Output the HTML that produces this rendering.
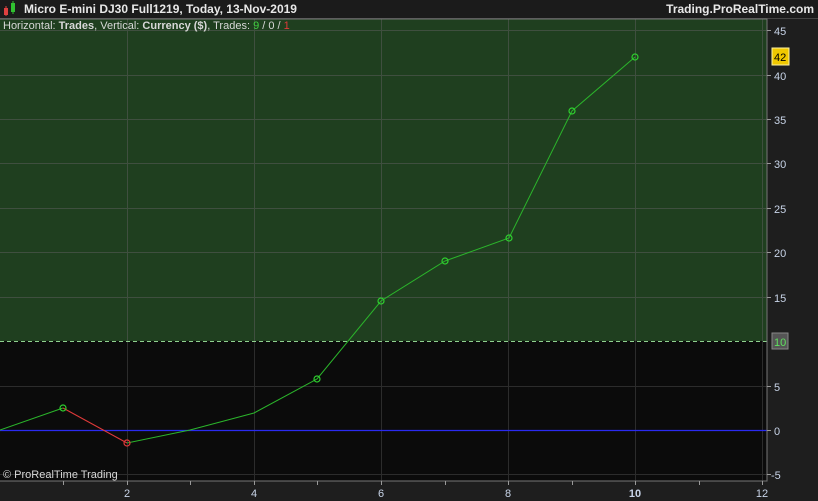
<!DOCTYPE html>
<html><head><style>
body{margin:0;width:818px;height:501px;background:#1e1e1e;overflow:hidden;font-family:"Liberation Sans",sans-serif}
</style></head><body>
<svg width="818" height="501" xmlns="http://www.w3.org/2000/svg" style="position:absolute;left:0;top:0">
<rect x="0" y="0" width="818" height="501" fill="#1e1e1e"/>
<rect x="0" y="0" width="818" height="18" fill="#1b1b1b"/>
<line x1="0" y1="18.5" x2="818" y2="18.5" stroke="#444"/>
<!-- icon -->
<rect x="4" y="8" width="4" height="7" fill="#e04040"/>
<line x1="6" y1="6" x2="6" y2="16" stroke="#e04040"/>
<rect x="11" y="3" width="4" height="9" fill="#30c030"/>
<line x1="13" y1="1" x2="13" y2="14" stroke="#30c030"/>
<text x="24" y="13" fill="#e8e8e8" font-size="12" font-weight="bold">Micro E-mini DJ30 Full1219, Today, 13-Nov-2019</text>
<text x="814" y="13" fill="#e8e8e8" font-size="12" font-weight="bold" text-anchor="end">Trading.ProRealTime.com</text>
<!-- plot -->
<rect x="0" y="19" width="767" height="322" fill="#1f3f1f"/>
<rect x="0" y="341" width="767" height="140" fill="#0b0b0b"/>
<g stroke="#3f4f3f" stroke-width="1">
<line x1="0" y1="30.5" x2="767" y2="30.5"/><line x1="0" y1="75.5" x2="767" y2="75.5"/>
<line x1="0" y1="119.5" x2="767" y2="119.5"/><line x1="0" y1="163.5" x2="767" y2="163.5"/>
<line x1="0" y1="208.5" x2="767" y2="208.5"/><line x1="0" y1="252.5" x2="767" y2="252.5"/>
<line x1="0" y1="297.5" x2="767" y2="297.5"/>
<line x1="127.5" y1="19" x2="127.5" y2="341"/><line x1="254.5" y1="19" x2="254.5" y2="341"/>
<line x1="381.5" y1="19" x2="381.5" y2="341"/><line x1="508.5" y1="19" x2="508.5" y2="341"/>
<line x1="635.5" y1="19" x2="635.5" y2="341"/><line x1="762.5" y1="19" x2="762.5" y2="341"/>
</g>
<g stroke="#2c2c2c" stroke-width="1">
<line x1="0" y1="386.5" x2="767" y2="386.5"/><line x1="0" y1="474.5" x2="767" y2="474.5"/>
<line x1="127.5" y1="341" x2="127.5" y2="481"/><line x1="254.5" y1="341" x2="254.5" y2="481"/>
<line x1="381.5" y1="341" x2="381.5" y2="481"/><line x1="508.5" y1="341" x2="508.5" y2="481"/>
<line x1="635.5" y1="341" x2="635.5" y2="481"/><line x1="762.5" y1="341" x2="762.5" y2="481"/>
</g>
<line x1="0" y1="341.5" x2="767" y2="341.5" stroke="#8fd08f" stroke-dasharray="4,3"/>
<line x1="0" y1="430.5" x2="767" y2="430.5" stroke="#2a2af0" stroke-width="1.3"/>
<rect x="-1" y="19" width="768" height="462" fill="none" stroke="#777"/>
<polyline points="0,430 63,408" fill="none" stroke="#2bb52b"/>
<polyline points="63,408 127,443" fill="none" stroke="#e03a3a"/>
<polyline points="127,443 190,430 254,413 317,379 381,301 445,261 509,238 572,111 635,57" fill="none" stroke="#2bb52b"/>
<g fill="none" stroke="#2fd02f" stroke-width="1.2">
<circle cx="63" cy="408" r="3"/><circle cx="317" cy="379" r="3"/><circle cx="381" cy="301" r="3"/>
<circle cx="445" cy="261" r="3"/><circle cx="509" cy="238" r="3"/><circle cx="572" cy="111" r="3"/><circle cx="635" cy="57" r="3"/>
</g>
<circle cx="127" cy="443" r="3" fill="none" stroke="#e03a3a" stroke-width="1.2"/>
<text x="3" y="29" font-size="11" fill="#d8d8d8">Horizontal: <tspan font-weight="bold">Trades</tspan>, Vertical: <tspan font-weight="bold">Currency ($)</tspan>, Trades: <tspan fill="#3fd03f">9</tspan> / 0 / <tspan fill="#e03a3a">1</tspan></text>
<text x="3" y="478" font-size="11" fill="#d8d8d8">© ProRealTime Trading</text>
<!-- right axis -->
<g stroke="#999"><line x1="767" y1="30.5" x2="771" y2="30.5"/><line x1="767" y1="75.5" x2="771" y2="75.5"/><line x1="767" y1="119.5" x2="771" y2="119.5"/><line x1="767" y1="163.5" x2="771" y2="163.5"/><line x1="767" y1="208.5" x2="771" y2="208.5"/><line x1="767" y1="252.5" x2="771" y2="252.5"/><line x1="767" y1="297.5" x2="771" y2="297.5"/><line x1="767" y1="386.5" x2="771" y2="386.5"/><line x1="767" y1="430.5" x2="771" y2="430.5"/><line x1="767" y1="474.5" x2="771" y2="474.5"/>
<line x1="190.5" y1="481" x2="190.5" y2="485"/><line x1="63.5" y1="481" x2="63.5" y2="485"/><line x1="317.5" y1="481" x2="317.5" y2="485"/><line x1="445.5" y1="481" x2="445.5" y2="485"/><line x1="572.5" y1="481" x2="572.5" y2="485"/><line x1="699.5" y1="481" x2="699.5" y2="485"/>
<line x1="127.5" y1="481" x2="127.5" y2="485"/><line x1="254.5" y1="481" x2="254.5" y2="485"/><line x1="381.5" y1="481" x2="381.5" y2="485"/><line x1="508.5" y1="481" x2="508.5" y2="485"/><line x1="635.5" y1="481" x2="635.5" y2="485"/><line x1="762.5" y1="481" x2="762.5" y2="485"/></g>
<g font-size="11" fill="#c8d4e8">
<text x="774" y="35">45</text><text x="774" y="80">40</text><text x="774" y="124">35</text><text x="774" y="168">30</text><text x="774" y="213">25</text><text x="774" y="257">20</text><text x="774" y="302">15</text><text x="774" y="391">5</text><text x="774" y="435">0</text><text x="771" y="479">-5</text>
<text x="127" y="497" text-anchor="middle">2</text><text x="254" y="497" text-anchor="middle">4</text><text x="381" y="497" text-anchor="middle">6</text><text x="508" y="497" text-anchor="middle">8</text><text x="635" y="497" text-anchor="middle" font-weight="bold">10</text><text x="762" y="497" text-anchor="middle">12</text>
</g>
<rect x="772" y="48" width="17" height="17" fill="#f0c800" stroke="#fff3a0"/>
<text x="774" y="61" font-size="11" fill="#000">42</text>
<rect x="772" y="333" width="16" height="16" fill="#555" stroke="#888"/>
<text x="774" y="346" font-size="11" fill="#5fe05f">10</text>
</svg>
</body></html>
